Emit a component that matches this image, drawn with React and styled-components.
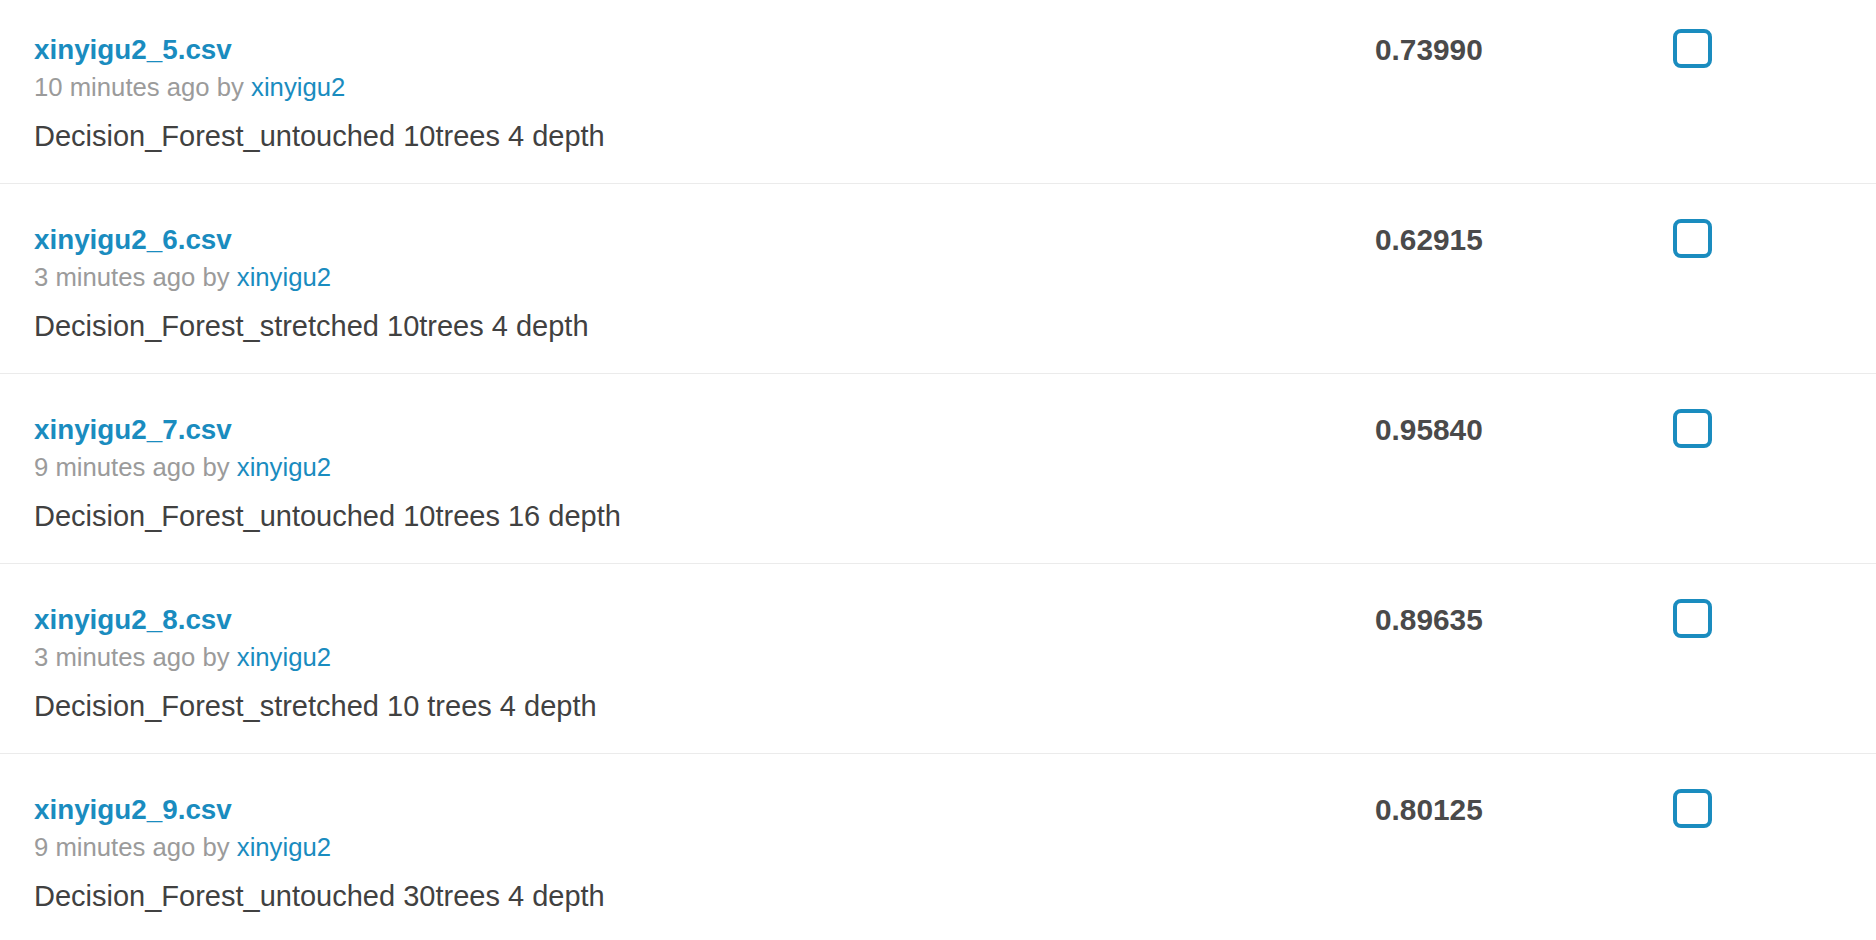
import React from "react";
import styled, { createGlobalStyle } from "styled-components";

const GlobalStyle = createGlobalStyle`
  html, body {
    margin: 0;
    padding: 0;
    background: #ffffff;
  }
  body {
    font-family: "Liberation Sans", Arial, sans-serif;
    overflow: hidden;
  }
`;

const List = styled.ul`
  list-style: none;
  margin: 0;
  padding: 0;
  width: 1876px;
`;

const Row = styled.li`
  display: grid;
  grid-template-columns: 1fr 298px 39px;
  align-items: start;
  padding: 39px 164px 29px 34px;
  border-bottom: 1px solid #ebebeb;

  &:first-child {
    padding-top: 33px;
  }
`;

const Main = styled.div`
  display: flex;
  flex-direction: column;
  min-width: 0;
`;

const FileName = styled.a`
  font-size: 27.8px;
  line-height: 34px;
  font-weight: 700;
  color: #1a8cbf;
  text-decoration: none;
  align-self: flex-start;
`;

const Meta = styled.div`
  font-size: 25.7px;
  line-height: 40px;
  color: #9b9b9b;
`;

const Author = styled.a`
  color: #1a8cbf;
  text-decoration: none;
`;

const Description = styled.div`
  margin-top: 11px;
  font-size: 29px;
  line-height: 36px;
  color: #414141;
`;

const Score = styled.div`
  font-size: 29.8px;
  line-height: 34px;
  font-weight: 700;
  color: #4a4a4a;
`;

const Check = styled.span`
  display: block;
  box-sizing: border-box;
  width: 39px;
  height: 39px;
  margin-top: -4px;
  border: 4px solid #1a8cbf;
  border-radius: 8px;
  background: #ffffff;
  cursor: pointer;
`;

const submissions = [
  { file: "xinyigu2_5.csv", ago: "10 minutes ago", desc: "Decision_Forest_untouched 10trees 4 depth", score: "0.73990" },
  { file: "xinyigu2_6.csv", ago: "3 minutes ago", desc: "Decision_Forest_stretched 10trees 4 depth", score: "0.62915" },
  { file: "xinyigu2_7.csv", ago: "9 minutes ago", desc: "Decision_Forest_untouched 10trees 16 depth", score: "0.95840" },
  { file: "xinyigu2_8.csv", ago: "3 minutes ago", desc: "Decision_Forest_stretched 10 trees 4 depth", score: "0.89635" },
  { file: "xinyigu2_9.csv", ago: "9 minutes ago", desc: "Decision_Forest_untouched 30trees 4 depth", score: "0.80125" },
];

export default function App() {
  return (
    <>
      <GlobalStyle />
      <List>
        {submissions.map((s) => (
          <Row key={s.file}>
            <Main>
              <FileName href="#">{s.file}</FileName>
              <Meta>
                {s.ago} by <Author href="#">xinyigu2</Author>
              </Meta>
              <Description>{s.desc}</Description>
            </Main>
            <Score>{s.score}</Score>
            <Check role="checkbox" aria-checked="false" />
          </Row>
        ))}
      </List>
    </>
  );
}
